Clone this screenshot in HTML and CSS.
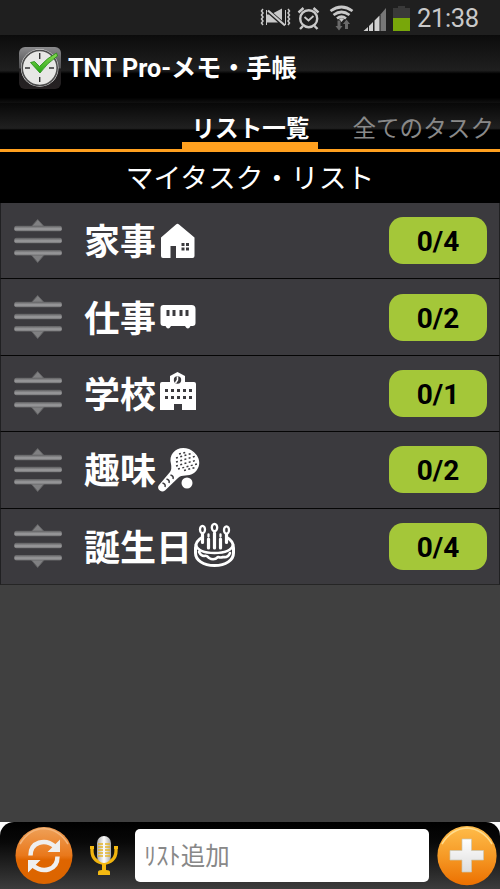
FILE: index.html
```html
<!DOCTYPE html>
<html lang="ja">
<head>
<meta charset="utf-8">
<title>TNT Pro-メモ・手帳</title>
<link rel="stylesheet" href="styles.css">
</head>
<body>
<svg class="defs" width="0" height="0" aria-hidden="true">
  <defs>
    <linearGradient id="bar" x1="0" y1="0" x2="0" y2="1"><stop offset="0" stop-color="#5c5c5e"/><stop offset=".5" stop-color="#949496"/><stop offset=".75" stop-color="#949496"/><stop offset="1" stop-color="#68686a"/></linearGradient>
    <linearGradient id="chrome" x1="0" y1="0" x2="0" y2="1"><stop offset="0" stop-color="#8b8b8d"/><stop offset=".5" stop-color="#515153"/><stop offset=".52" stop-color="#211f20"/><stop offset="1" stop-color="#252122"/></linearGradient>
    <linearGradient id="check" x1="0" y1="0" x2="0" y2="1"><stop offset="0" stop-color="#8ddd55"/><stop offset="1" stop-color="#24a514"/></linearGradient>
    <linearGradient id="orange" x1="0" y1="0" x2="0" y2="1"><stop offset="0" stop-color="#efa159"/><stop offset=".5" stop-color="#e9781b"/><stop offset=".58" stop-color="#df6500"/><stop offset="1" stop-color="#db6500"/></linearGradient>
    <linearGradient id="amber" x1="0" y1="0" x2="0" y2="1"><stop offset="0" stop-color="#ffbd4b"/><stop offset=".5" stop-color="#f69a26"/><stop offset="1" stop-color="#ec7000"/></linearGradient>
    <linearGradient id="silver" x1="0" y1="0" x2="0" y2="1"><stop offset="0" stop-color="#fff"/><stop offset="1" stop-color="#ddd"/></linearGradient>
    <linearGradient id="capsule" x1="0" y1="0" x2="1" y2="0"><stop offset="0" stop-color="#aaa"/><stop offset=".5" stop-color="#fff"/><stop offset="1" stop-color="#aaa"/></linearGradient>
    <symbol id="grip" viewBox="0 0 50 50">
      <path d="M18 11 24.700 3.500 31.500 11zM17.500 38l7.200 8.500L32 38z" fill="#808082" stroke="#626264"/>
      <g fill="url(#bar)"><rect x="1.300" y="9.700" width="47.500" height="5.500" rx="2"/><rect x="1.300" y="21.800" width="47.500" height="5.500" rx="2"/><rect x="1.300" y="33.900" width="47.500" height="5.500" rx="2"/></g>
    </symbol>
  </defs>
</svg>
<div class="statusbar">
  <svg width="155" height="35" viewBox="260 0 155 35">
    <g fill="none" stroke="#c9c9c9" stroke-width="1.500">
      <path d="M263 9l-1.500 2 1.500 2-1.500 2 1.500 2-1.500 2 1.500 2-1.500 2 1.500 2M288 9l1.500 2-1.500 2 1.500 2-1.500 2 1.500 2-1.500 2 1.500 2-1.500 2"/>
      <path d="M266.500 10v15M285.500 10v15" stroke-width="1"/>
      <path d="M268 10.500l17 15" stroke-width="2.200"/>
    </g>
    <path d="M267 14.500h2l9 8H267zM273.500 13l8.500-4.500V20.500z" fill="#c9c9c9"/>
    <g fill="none" stroke="#c9c9c9" stroke-width="2.400"><circle cx="308.700" cy="18.700" r="8.500"/><path d="M298.500 12.500l5-4.500M318.500 12.500l-5-4.500M303 26l-3 3M314.500 26l3 3"/><path d="M304.500 17l4 3.500 5-4.500" stroke-width="1.800"/></g>
    <g fill="none" stroke="#c9c9c9" stroke-width="2.700"><path d="M330.500 11q11-8 22 0M333.500 15q8-6 16 0M337 18.500q4.500-3.500 9 0"/></g>
    <path d="M339 19q2.500-1.500 5 0l-2.500 3z" fill="#c9c9c9"/>
    <path d="M337.500 20.500h3V26h2l-3.500 4.500-3.500-4.500h2zM345 29h3v-5h2l-3.500-4.500-3.500 4.500h2z" fill="#6a6a6a"/>
    <path d="M363.500 31l4.500-4v4zM369 26l4-4v9h-4zM374.500 20.500l5-5V31h-5z" fill="#d0d0d0"/><path d="M380.500 14.500l5.500-6.500v23h-5.500z" fill="#777"/>
    <path d="M393 8h5V6h7v2h5v10h-17z" fill="#393939"/><path d="M393 18h17v13h-17z" fill="#78a70a"/>
  </svg>
  <span class="time">21:38</span>
</div>
<header class="titlebar">
  <svg width="42" height="42" viewBox="0 0 42 42">
    <rect width="42" height="42" rx="6" fill="url(#chrome)"/>
    <circle cx="20.700" cy="21" r="18.800" fill="#ececec"/><circle cx="20.700" cy="21" r="17.500" fill="#e7e7e5" stroke="#4c4c4c" stroke-width="1.600"/>
    <path d="M20.700 6v6M20.700 30v5M6 21h5M30 21h5" stroke="#333" stroke-width="1.400"/>
    <path d="M11.500 15.500l4-1 5 5Q28 11 37.500 6l1 3Q28 16 21 26z" fill="url(#check)" stroke="#208812" stroke-width=".8"/>
  </svg>
  <h1>TNT Pro-メモ・手帳</h1>
</header>
<nav class="tabs"><span class="tab active">リスト一覧</span><span class="tab">全てのタスク</span></nav>
<h2 class="heading">マイタスク・リスト</h2>
<main class="list">
  <div class="row"><svg class="grip"><use href="#grip"/></svg><span class="name">家事</span>
    <svg class="emoji" viewBox="0 0 44 44"><path fill="#fff" fill-rule="evenodd" d="M2 18.500 17 5.500q1.500-1.500 3 0L35.500 18.500V37q0 2-2 2H17V27h-5.500v12H4q-2 0-2-2zM22.500 24v3h3v-3zm4.500 0v3h3v-3zM22.500 28.500v3h3v-3zm4.500 0v3h3v-3z"/></svg>
    <span class="badge">0/4</span></div>
  <div class="row"><svg class="grip"><use href="#grip"/></svg><span class="name">仕事</span>
    <svg class="emoji" viewBox="0 0 44 44"><path fill="#fff" fill-rule="evenodd" d="M4.500 10h28q4 0 4 4v14q0 3-3 3h-2q-2.500 5-5.500 0H12q-3 5-5.500 0h-2q-3 0-3-3V13q0-3 3-3zM7.500 15v6h3v-6zm6 0v6h3v-6zm7 0v6h3v-6zm6 0v6h3v-6z"/></svg>
    <span class="badge">0/2</span></div>
  <div class="row"><svg class="grip"><use href="#grip"/></svg><span class="name">学校</span>
    <svg class="emoji" viewBox="0 0 44 44"><path fill="#fff" d="M1 13q0-2 2-2h8V5l7.500-4L26 5v6h9q2 0 2 2v26H23v-6h-8v6H1z"/><g fill="#3b3a3e"><circle cx="18.500" cy="9" r="3.700"/><path d="M6 18h3v3H6zm6 0h3v3h-3zm6 0h3v3h-3zm6 0h3v3h-3zm6 0h3v3h-3zM6 25h3v3H6zm6 0h3v3h-3zm6 0h3v3h-3zm6 0h3v3h-3zm6 0h3v3h-3z"/></g><path d="M18.500 5.500V9l-2 3" fill="none" stroke="#fff" stroke-width="1.500"/></svg>
    <span class="badge">0/1</span></div>
  <div class="row"><svg class="grip"><use href="#grip"/></svg><span class="name">趣味</span>
    <svg class="emoji" viewBox="0 0 44 44"><path fill="#fff" d="M12 16C9 5 19-3 30 1c11 5 14 17 5 24-6 4-12 1-16 5L6 42.500c-4 3-9-2-6-5.500l11-13q2-3 1-8z"/><circle cx="28" cy="35" r="5.500" fill="#fff"/><g fill="none" stroke="#3b3a3e" stroke-width="1.500" stroke-dasharray="2 2.400"><path d="M20 6l8-2M17 10l17-5M17 14l20-6M17 18l21-6M19 21l19-5M25 22.500l11-3"/><path d="M3.500 35q3.500 1 2.500 4M7.500 31q3.500 1 2.500 4M11.500 27q3.500 1 2.500 4" stroke-dasharray="none"/></g></svg>
    <span class="badge">0/2</span></div>
  <div class="row"><svg class="grip"><use href="#grip"/></svg><span class="name">誕生日</span>
    <svg class="emoji" viewBox="0 0 44 44"><g fill="none" stroke="#fff" stroke-width="3" stroke-linecap="round" stroke-linejoin="round"><path d="M7 13.500Q.5 17 .5 24v5C.5 36 8 41.500 19.500 41.500S38.500 36 38.500 29v-5q0-7-6.500-10.500"/><path d="M1 21c2 7 10 8 18.500 8S36 28 38 21M4 28q2 4 5 4 3-1 5 2 5 3 9-1 3 1 5 0 5 1 7-4" stroke-width="2.600"/><path d="M7.500 10.500v8M13.500 15v9M19.500 9v15M25.500 15v9M31.500 10.500v8" stroke-width="3.200"/><g stroke-width="2.300"><ellipse cx="7.500" cy="5.500" rx="2.500" ry="3.700"/><ellipse cx="19.500" cy="3.500" rx="2.700" ry="3.700"/><ellipse cx="31.500" cy="6" rx="2.500" ry="3.700"/><path d="M13.500 10.500v2M25.500 10.500v2"/></g></g></svg>
    <span class="badge">0/4</span></div>
</main>
<footer class="bottom">
  <div class="toolbar">
    <svg width="58" height="58" viewBox="0 0 58 58"><circle cx="29" cy="28.500" r="28.500" fill="url(#orange)"/><path d="M5 17Q14 2 29 1.500q15 1 24 15.500" fill="none" stroke="#f4b57a" stroke-width="1.500"/>
      <g fill="none" stroke="#efefef" stroke-width="4.500"><path d="M15.500 28.500C15.500 15 30 11 40 19.500"/><path d="M42.500 29.500C42.500 43 28 47 18 38.500"/></g><path d="M45 12.500v12.500H32.500zM13 45.500V33h12.500z" fill="#efefef"/></svg>
    <svg class="mic" width="28" height="40" viewBox="0 0 28 40"><path d="M2 11v4c0 16 24 16 24 0v-4" fill="none" stroke="#f1b40e" stroke-width="3.300"/><path d="M0 10h4v3H0zm24 0h4v3h-4zM12 26h4v8q4 0 4 2v3H8v-3q0-2 4-2z" fill="#f5ba12"/><rect x="7" y="0" width="14" height="27" rx="7" fill="url(#capsule)"/><path d="M8 8h5M8 11h5M8 14h5M8 17h5M8 20h5M15 8h5M15 11h5M15 14h5M15 17h5M15 20h5" stroke="#e6b526" stroke-width="1.600"/></svg>
    <div class="field">ﾘｽﾄ追加</div>
    <svg class="add" width="60" height="60" viewBox="0 0 60 60"><circle cx="30" cy="29.700" r="29.600" fill="url(#amber)"/><path d="M5 18Q14 3 30 2q16 1 25 16" fill="none" stroke="#ffdc8c" stroke-width="1.600"/><path d="M25 13h9.500v11.500H46.500V34H34.500v12H25V34H13v-9.500h12z" fill="url(#silver)" stroke="#c9c7b5" stroke-width=".7"/></svg>
  </div>
</footer>
</body>
</html>
```
FILE: styles.css
```css
* { box-sizing: border-box; }
body {
  margin: 0;
  width: 500px;
  height: 889px;
  overflow: hidden;
  display: flex;
  flex-direction: column;
  background: #404040;
  color: #fff;
  font-family: Roboto, "Noto Sans CJK JP", sans-serif;
}
svg { display: block; flex: none; }
.defs { position: absolute; }
.statusbar {
  height: 35px;
  flex: none;
  display: flex;
  align-items: center;
  padding-left: 260px;
  background: #1f1f1f;
}
.time { margin-left: 2px; padding-top: 2px; color: #c9c9c9; font-size: 25.5px; line-height: 35px; letter-spacing: -.35px; }
.titlebar {
  height: 68px;
  flex: none;
  display: flex;
  align-items: center;
  padding: 0 19px 2px;
  gap: 7px;
  background: linear-gradient(#0b0b0b 0%, #111 12%, #1f1f1f 52%, #000 57%, #000 92%, #111 100%);
}
.titlebar h1 { margin: 0; padding-top: 1px; font-size: 25.1px; line-height: 34px; font-weight: 700; white-space: nowrap; }
.tabs {
  height: 49px;
  flex: none;
  display: flex;
  justify-content: flex-end;
  gap: 26px;
  padding-right: 6px;
  border-bottom: 3px solid #ffa01f;
  background: linear-gradient(#080808, #202020 55%, #000 59%, #000);
}
.tab { padding-top: 2px; font-size: 23.6px; line-height: 48px; color: #898989; white-space: nowrap; }
.tab.active {
  width: 136px;
  height: 46px;
  margin-right: 8px;
  text-align: center;
  font-weight: 700;
  color: #fff;
  border-bottom: 7px solid #ffa01f;
}
.heading {
  height: 51px;
  flex: none;
  margin: 0;
  padding-top: 1px;
  background: #000;
  text-align: center;
  font-size: 27.8px;
  line-height: 51px;
  font-weight: 400;
}
.list { flex: none; }
.row {
  height: 76.4px;
  display: flex;
  align-items: center;
  padding: 0 12px;
  background: #3b3a3e;
  border: 1px solid #202022;
  border-top: 0;
  border-bottom-color: #050505;
}
.row:last-child { border-bottom-color: #252525; }
.grip { width: 50px; height: 50px; }
.name { margin-left: 21px; padding-top: 5px; font-size: 36px; line-height: 70px; font-weight: 700; }
.emoji { width: 44px; height: 44px; margin-left: 3px; overflow: visible; }
.badge {
  width: 98px;
  height: 47px;
  margin-left: auto;
  border-radius: 14px;
  background: #a4c739;
  color: #000;
  text-align: center;
  font-size: 28px;
  line-height: 50px;
  font-weight: 700;
}
.bottom { height: 67px; flex: none; margin-top: auto; background: #fff; }
.toolbar {
  height: 67px;
  display: flex;
  align-items: center;
  padding: 0 3px 0 15px;
  border-radius: 14px 14px 0 0;
  background: linear-gradient(#000, #080808 30%, #3c3c3c);
}
.mic { margin-left: 17px; }
.field {
  width: 294px;
  height: 53px;
  margin-left: 17px;
  padding-left: 9px;
  border-radius: 5px;
  background: #fff;
  color: #888;
  font-size: 24.5px;
  line-height: 55px;
}
.add { margin-left: 8px; }
```
